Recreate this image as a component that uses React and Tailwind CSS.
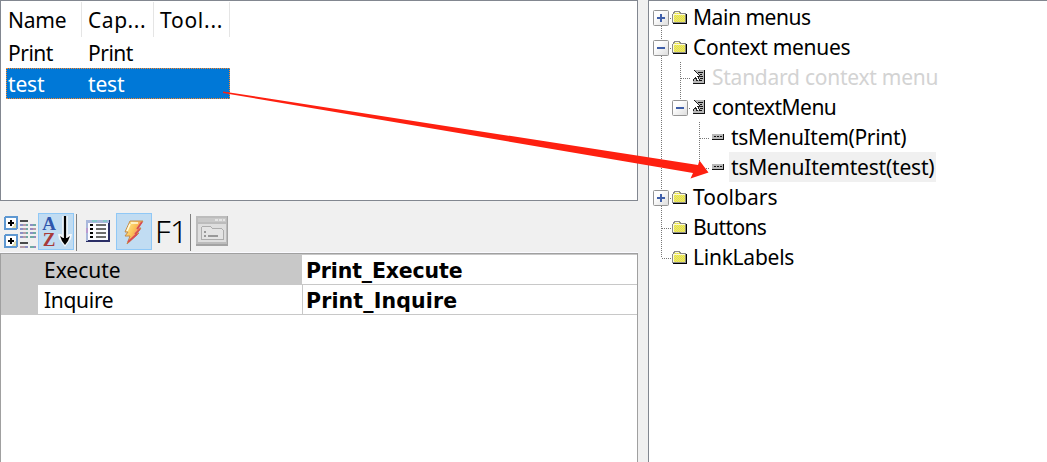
const COLUMNS = [
  { label: "Name", width: "w-[76px]", track: "tracking-[-0.2px]" },
  { label: "Cap...", width: "w-[72px]", track: "tracking-[0.55px]" },
  { label: "Tool...", width: "w-[76px]", track: "tracking-[0.75px]" },
];

const TREE = [
  { label: "Main menus", depth: 0, icon: "folder", box: "+", first: true, track: "tracking-[-0.45px]" },
  { label: "Context menues", depth: 0, icon: "folder", box: "-", track: "tracking-[-0.3px]" },
  { label: "Standard context menu", depth: 1, icon: "menu", muted: true, track: "tracking-[-0.25px]" },
  { label: "contextMenu", depth: 1, icon: "menu", box: "-", last: true, track: "tracking-[-0.55px]" },
  { label: "tsMenuItem(Print)", depth: 2, icon: "item", track: "tracking-[-0.32px]" },
  { label: "tsMenuItemtest(test)", depth: 2, icon: "item", last: true, selected: true, track: "tracking-[-0.2px]" },
  { label: "Toolbars", depth: 0, icon: "folder", box: "+", track: "tracking-[0px]" },
  { label: "Buttons", depth: 0, icon: "folder", track: "tracking-[-0.6px]" },
  { label: "LinkLabels", depth: 0, icon: "folder", last: true, track: "tracking-[-0.25px]" },
];

function FolderIcon() {
  return (
    <svg width="16" height="13" viewBox="0 0 16 13" shapeRendering="crispEdges" className="block">
      <defs>
        <pattern id="dither" width="2" height="2" patternUnits="userSpaceOnUse">
          <path d="M0 0h2v2H0z" fill="#f3ec2a" />
          <path d="M0 0h1v1H0zM1 1h1v1H1z" fill="#dedd8c" />
        </pattern>
      </defs>
      <path d="M1 3h14v9.500H1z" fill="#000" />
      <path d="M0 3l1-1 1-2h5l2 2h5v10H0z" fill="#8a8a8a" />
      <path d="M1 3h1l1-2h4l1 2h5v8H1z" fill="url(#dither)" />
      <path d="M1 3.500h12M1.500 4v7M3 1.500h4" stroke="#fbfad8" fill="none" />
      <path d="M14.500 3v10M1 12.500h14" stroke="#000" fill="none" />
    </svg>
  );
}

function MenuIcon() {
  return (
    <svg width="12" height="14" viewBox="0 0 12 14" shapeRendering="crispEdges" className="block">
      <path d="M0 0h12v14H0z" fill="#111" />
      <path d="M0 0h11v13H0z" fill="#b8b8b8" />
      <path d="M5 2.500h5M7 4.500h2M8 6.500h2M7 8.500h3M6 10.500h3" stroke="#111" fill="none" />
      <path d="M0 0l6 6H4l2 4-1.500 1L2.500 7 0 9z" fill="#fff" />
      <path d="M1 0l6 6H4.500l2 4M0 10.500l2.500-3 2 4" stroke="#222" fill="none" />
    </svg>
  );
}

function ItemIcon() {
  return (
    <svg width="12" height="6" viewBox="0 0 12 6" shapeRendering="crispEdges" className="block">
      <path d="M0 0h12v6H0z" fill="#111" />
      <path d="M0 0h11v5H0z" fill="#b8b8b8" />
      <path d="M2 2.500h2M5 2.500h2M8 2.500h2" stroke="#111" />
    </svg>
  );
}

function Expander({ sign }) {
  return (
    <svg width="16" height="16" viewBox="0 0 16 16" className="block shrink-0">
      <defs>
        <linearGradient id="face" x1="0" y1="0" x2="1" y2="1">
          <stop offset="0.3" stopColor="#fff" />
          <stop offset="1" stopColor="#dcdcdc" />
        </linearGradient>
      </defs>
      <rect x=".5" y=".5" width="15" height="15" rx="1" fill="url(#face)" stroke="#959595" />
      <path d={sign === "+" ? "M4 8h8M8 4v8" : "M4 8h8"} stroke="#3f5fa9" strokeWidth="2" />
    </svg>
  );
}

const dotted = { stroke: "#777", strokeDasharray: "1 1", shapeRendering: "crispEdges" };

// Connector lines for one level of the tree; the vertical runs down the middle of the 19px slot.
function Branch({ node }) {
  return (
    <svg width="19" height="30" viewBox="0 0 19 30" className="block shrink-0">
      {!node.first && <line x1="8.500" y1="0" x2="8.500" y2="16" {...dotted} />}
      {!node.last && <line x1="8.500" y1="16" x2="8.500" y2="30" {...dotted} />}
      <line x1="9" y1="16.500" x2="19" y2="16.500" {...dotted} />
      {node.box && (
        <g transform="translate(0 8)">
          <Expander sign={node.box} />
        </g>
      )}
    </svg>
  );
}

function Rail({ show }) {
  return (
    <svg width="19" height="30" viewBox="0 0 19 30" className="block shrink-0">
      {show && <line x1="8.500" y1="0" x2="8.500" y2="30" {...dotted} />}
    </svg>
  );
}

function TreeRow({ node }) {
  return (
    <div className="flex h-[30px] items-center">
      {node.depth > 0 && <Rail show />}
      {node.depth > 1 && <Rail />}
      <Branch node={node} />
      <span className={node.icon === "folder" ? "w-[19px] pt-px" : "w-[19px] pl-[2px]"}>
        {node.icon === "folder" && <FolderIcon />}
        {node.icon === "menu" && <MenuIcon />}
        {node.icon === "item" && <ItemIcon />}
      </span>
      <span
        className={`h-[30px] whitespace-nowrap px-[2px] leading-[30px] ${node.track} ${
          node.selected ? "bg-[#f0f0f0]" : ""
        } ${node.muted ? "text-[#d3d3d3]" : ""}`}
      >
        {node.label}
      </span>
    </div>
  );
}

function CategorizedIcon() {
  return (
    <svg width="32" height="33" viewBox="0 0 32 33" shapeRendering="crispEdges">
      {[0, 18].map((y) => (
        <g key={y} transform={`translate(0 ${y})`}>
          <rect x="1" y="1" width="12" height="12" rx="1" fill="#fff" stroke="#5e98d2" strokeWidth="2" />
          <path d="M8 12h4V6z" fill="#e3dfb0" />
          <path d="M4 7h6M7 4v6" stroke="#000" strokeWidth="2" />
        </g>
      ))}
      <path d="M16 5h8M16 27h8" stroke="#4a4a4a" strokeWidth="2" />
      <path d="M16 9h3M16 13h3M16 17h3M16 21h3M21 31h3M26 9h3M26 17h3" stroke="#8c8fc4" strokeWidth="2" />
      <path d="M19 9h3M19 13h3M19 17h3M19 21h3M16 31h5M29 13h3" stroke="#b69ba8" strokeWidth="2" />
      <path d="M22 9h2M22 13h2M22 17h2M22 21h2M29 9h3M29 17h3M26 31h4M26 21h4" stroke="#6fa9a4" strokeWidth="2" />
      <path d="M26 13h3M30 21h2M30 31h2" stroke="#9a86bd" strokeWidth="2" />
    </svg>
  );
}

function SortIcon() {
  return (
    <div className="flex">
      <div className="flex w-[18px] flex-col items-center font-['Liberation_Serif',serif] text-[19px] font-bold leading-[16px]">
        <span className="text-[#2f56ad]">A</span>
        <span className="text-[#a83a3a]">Z</span>
      </div>
      <svg width="14" height="32" viewBox="0 0 14 32">
        <path d="M7 0v24" stroke="#e8f1f8" strokeWidth="6" />
        <path d="M0 18h3l4 4 4-4h3l-1 5-6 8-6-8z" fill="#f4f7fa" />
        <path d="M2 20l3 2h4l3-2-2 5-3 4-3-4z" fill="#000" />
        <path d="M7 0v24" stroke="#000" strokeWidth="2.200" />
      </svg>
    </div>
  );
}

function PropertiesIcon() {
  return (
    <svg width="24" height="22" viewBox="0 0 24 22" shapeRendering="crispEdges">
      <path d="M0 0h24v22H0z" fill="#2b2f66" />
      <path d="M0 0h23v3H2v18H0z" fill="#a9b8dc" />
      <path d="M6 0h5v2H6zM17 0h4v2h-4z" fill="#86c7c9" />
      <path d="M0 8h2v5H0z" fill="#b99bd0" />
      <path d="M2 3h20v17H2z" fill="#fbfbff" />
      <path d="M4 5h3M4 9h3M4 13h3M4 17h3" stroke="#000" strokeWidth="2" />
      <path d="M10 5h10M10 9h10M10 13h10M10 17h10" stroke="#6c6c6c" strokeWidth="2" />
    </svg>
  );
}

function EventsIcon() {
  return (
    <svg width="20" height="25" viewBox="0 0 20 25">
      <defs>
        <linearGradient id="bolt" x1="0" y1="0" x2="1" y2=".6">
          <stop offset="0" stopColor="#fff0a0" />
          <stop offset=".5" stopColor="#fbc559" />
          <stop offset="1" stopColor="#ee6a5c" />
        </linearGradient>
      </defs>
      <path d="M6 1h13l-5 7h3l-4 5h2L3 24l3-8H1l3-4H1z" fill="url(#bolt)" stroke="#c48a4a" />
      <path d="M18 2l-5 7M16 9l-5 5M13 14l-9 8" stroke="#d84b55" strokeWidth="1.700" />
      <path d="M7 3h7M6 4l-3 7" stroke="#fffbe0" strokeWidth="1.600" fill="none" />
    </svg>
  );
}

function PagesIcon() {
  return (
    <svg width="32" height="30" viewBox="0 0 32 30" shapeRendering="crispEdges">
      <path d="M0 0h32v30H0z" fill="#a3a3a3" />
      <path d="M0 0h31v28H0z" fill="#bcbcbc" />
      <path d="M2 2h28v4H2z" fill="#c9c9c9" />
      <path d="M19 3h3v2h-3zM23 3h3v2h-3zM27 3h2v2h-2z" fill="#e4e4e4" />
      <path d="M2 8h28v18H2z" fill="#dedede" />
      <path d="M5 23V12l2-2h7l2 2h9l2 2v9z" fill="#e4e4e4" stroke="#adadad" />
      <path d="M8 16h2M8 20h2M12 20h10" stroke="#999" strokeWidth="2" />
    </svg>
  );
}

function Toolbar() {
  return (
    <div className="flex h-[52px] items-start border-b border-[#fafaff] pl-1 pt-3">
      <div className="flex h-9 w-[34px] items-start pt-[3px]">
        <CategorizedIcon />
      </div>
      <div className="flex h-[37px] w-9 border border-[#90c8f6] bg-[#c1dcf2] pl-px pt-[2px]">
        <SortIcon />
      </div>
      <div className="ml-[2px] mt-px h-[37px] w-px bg-[#808080]" />
      <div className="ml-[9px] mt-[7px] w-[30px]">
        <PropertiesIcon />
      </div>
      <div className="flex h-[37px] w-9 border border-[#90c8f6] bg-[#c1dcf2] pl-[7px] pt-[6px]">
        <EventsIcon />
      </div>
      <div className="w-[38px] whitespace-nowrap pl-[3px] font-['Noto_Sans',sans-serif] text-[31px] font-light leading-[36px] tracking-[-0.6px]">
        F1
      </div>
      <div className="mt-px h-[37px] w-px bg-[#808080]" />
      <div className="ml-[5px] mt-[3px]">
        <PagesIcon />
      </div>
    </div>
  );
}

function EventList() {
  const bold = "font-['DejaVu_Sans','Noto_Sans',sans-serif] text-[20.5px] font-bold";
  return (
    <div className="h-[209px] border-l border-r border-t border-[#a0a0a0] bg-white">
      <div className="flex h-[31px] border-b border-[#c8c8c8] bg-[#c8c8c8]">
        <div className="w-[301px] pl-[43px] leading-[33px]">Execute</div>
        <div className="mt-px flex-1 bg-white pl-1 leading-[30px]">
          <span className={`${bold} tracking-[-0.15px]`}>Print_Execute</span>
        </div>
      </div>
      <div className="flex h-[30px] border-b border-[#c8c8c8] leading-[30px]">
        <div className="w-[37px] bg-[#c8c8c8]" />
        <div className="w-[265px] border-r border-[#c8c8c8] pl-[6px] tracking-[-0.3px]">Inquire</div>
        <div className="flex-1 pl-[3px]">
          <span className={`${bold} tracking-[0.15px]`}>Print_Inquire</span>
        </div>
      </div>
    </div>
  );
}

function ActionList() {
  return (
    <div className="h-[201px] border border-[#828790] bg-white pl-[5px] pt-px">
      <div className="flex h-9 leading-[37px]">
        {COLUMNS.map((c) => (
          <div key={c.label} className={`${c.width} ${c.track} h-[35px] border-r border-[#e5e5e5] pl-[6px] first:pl-[2px]`}>
            {c.label}
          </div>
        ))}
      </div>
      <div className="flex h-[30px] leading-[30px] tracking-[-0.5px]">
        <div className="w-20 pl-[2px]">Print</div>
        <div className="pl-[2px]">Print</div>
      </div>
      <div className="flex h-[31px] w-[224px] border border-dotted border-[#ff8728] bg-[#0078d7] leading-[31px] tracking-[-0.2px] text-white">
        <div className="w-20 pl-px">test</div>
        <div className="pl-px">test</div>
      </div>
    </div>
  );
}

export default function App() {
  return (
    <div className="relative flex h-[462px] w-[1047px] overflow-hidden bg-[#f0f0f0] font-['Noto_Sans',sans-serif] text-[21px] text-black">
      <div className="w-[638px]">
        <ActionList />
        <Toolbar />
        <EventList />
      </div>
      <div className="ml-[10px] flex-1 border-l border-t border-[#828790] bg-white pl-1 pt-px">
        {TREE.map((n) => (
          <TreeRow key={n.label} node={n} />
        ))}
      </div>
      <svg className="pointer-events-none absolute inset-0" width="1047" height="462">
        <path d="M223 91.500L698 165L699.500 160.500L708.500 172.500L690.500 178.500L693 173L223 93z" fill="#fe2010" />
      </svg>
    </div>
  );
}
